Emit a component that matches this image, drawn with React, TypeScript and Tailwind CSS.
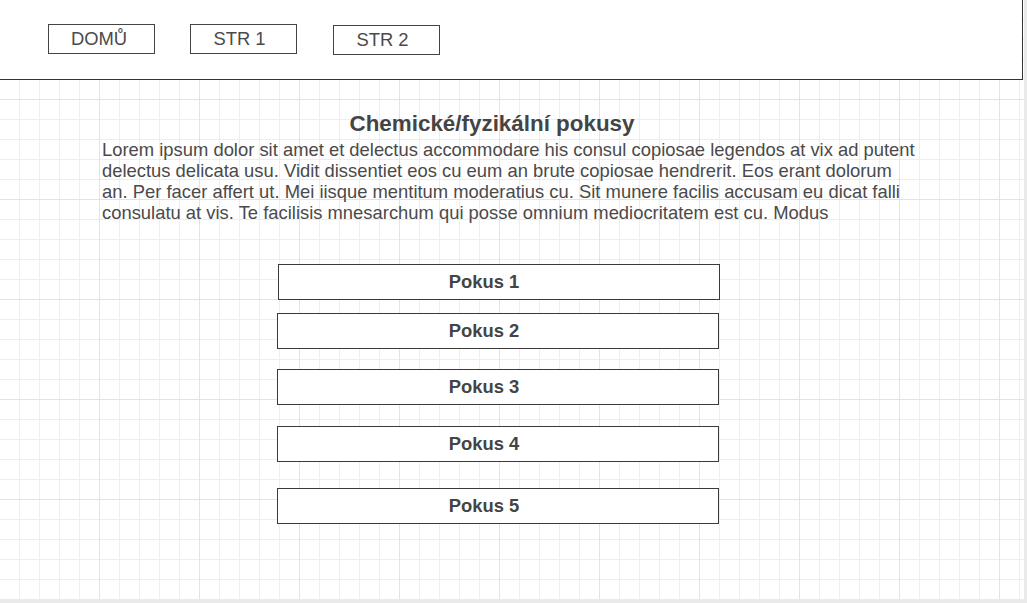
import React from 'react';

const font = { fontFamily: '"Liberation Sans", Arial, Helvetica, sans-serif' };

const navItems = [
  { label: 'DOMŮ', cls: 'ml-[48px] mt-[24px] pr-[5px]' },
  { label: 'STR 1', cls: 'ml-[35px] mt-[24px] pr-[8px]' },
  { label: 'STR 2', cls: 'ml-[36px] mt-[25px] pr-[8px]' },
];

// box offsets follow the wireframe: each one sits a little differently
const experiments = [
  { label: 'Pokus 1', cls: 'mt-[41px] ml-[278px] pr-[30px]' },
  { label: 'Pokus 2', cls: 'mt-[13px] ml-[277px] pr-[28px]' },
  { label: 'Pokus 3', cls: 'mt-[20px] ml-[277px] pr-[28px]' },
  { label: 'Pokus 4', cls: 'mt-[21px] ml-[277px] pr-[28px]' },
  { label: 'Pokus 5', cls: 'mt-[26px] ml-[277px] pr-[28px]' },
];

const lorem = [
  'Lorem ipsum dolor sit amet et delectus accommodare his consul copiosae legendos at vix ad putent',
  'delectus delicata usu. Vidit dissentiet eos cu eum an brute copiosae hendrerit. Eos erant dolorum',
  'an. Per facer affert ut. Mei iisque mentitum moderatius cu. Sit munere facilis accusam eu dicat falli',
  'consulatu at vis. Te facilisis mnesarchum qui posse omnium mediocritatem est cu. Modus',
];

export default function App() {
  return (
    <div className="w-[1027px] h-[603px] bg-[#eaeaea] overflow-hidden text-[#444]" style={font}>
      <div className="w-[1024px] h-[599px] bg-white bg-[linear-gradient(to_right,#e3e3e3_1px,transparent_1px),linear-gradient(to_bottom,#e3e3e3_1px,transparent_1px),linear-gradient(to_right,#eeeeee_1px,transparent_1px),linear-gradient(to_bottom,#eeeeee_1px,transparent_1px)] bg-[size:100px_100px,100px_100px,20px_20px,20px_20px] bg-[position:-1px_-1px]">
        {/* header */}
        <header className="w-[1023px] h-[80px] bg-white border-b border-r border-[#333] flex items-start">
          {navItems.map((n) => (
            <button
              key={n.label}
              className={`${n.cls} w-[107px] h-[30px] border border-[#444] bg-white flex items-center justify-center text-[18.4px] leading-[28px] text-[#4a4a4a]`}
            >
              {n.label}
            </button>
          ))}
        </header>

        {/* content */}
        <div className="pt-[31px]">
          <h1 className="ml-[102px] w-[780px] text-center font-bold text-[22.4px] leading-[26px] text-[#444]">
            Chemické/fyzikální pokusy
          </h1>
          <p className="ml-[102px] mt-[2px] text-[18.4px] leading-[21px] text-[#4a4a4a] whitespace-nowrap">
            {lorem.map((l, i) => (
              <span key={i} className="block">{l}</span>
            ))}
          </p>

          <div className="flex flex-col">
            {experiments.map((e) => (
              <div
                key={e.label}
                className={`${e.cls} w-[442px] h-[36px] bg-white border border-[#3a3a3a] flex items-center justify-center font-bold text-[18.4px] text-[#444]`}
              >
                {e.label}
              </div>
            ))}
          </div>
        </div>
      </div>
    </div>
  );
}
